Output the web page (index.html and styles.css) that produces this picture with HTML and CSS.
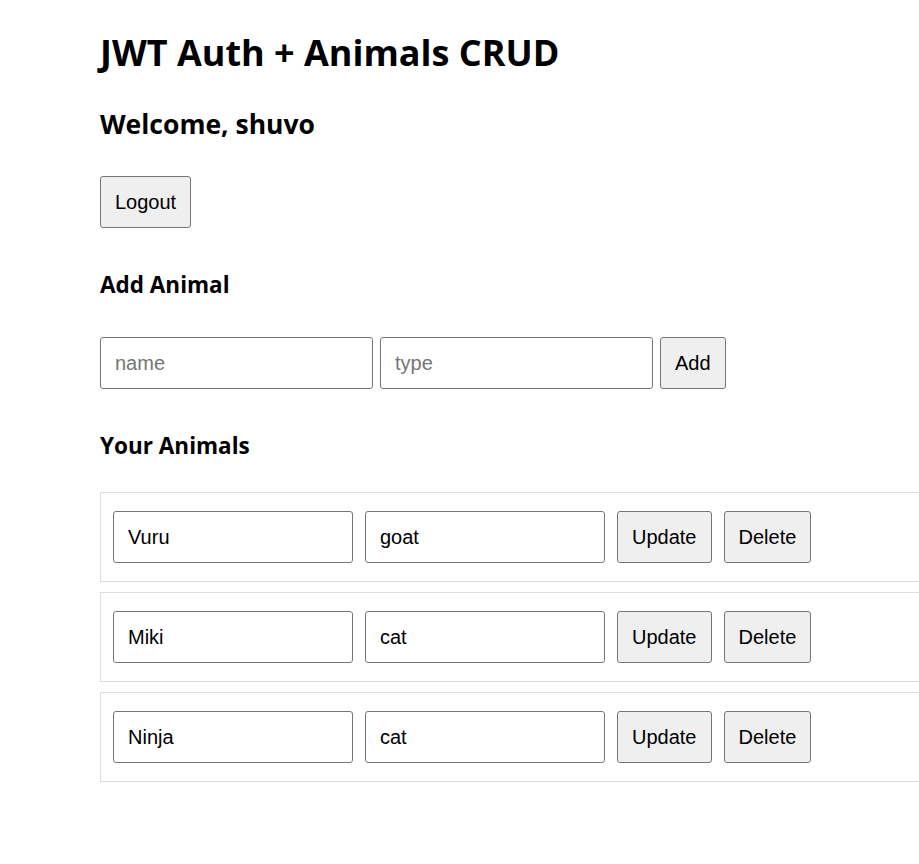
FILE: index.html
```html
<!DOCTYPE html>
<html lang="en">
<head>
<meta charset="utf-8">
<title>JWT Auth + Animals CRUD</title>
<link rel="stylesheet" href="styles.css">
</head>
<body>
<main class="page">
  <h1 class="title">JWT Auth + Animals CRUD</h1>
  <h2 class="welcome">Welcome, shuvo</h2>
  <button class="btn logout" type="button">Logout</button>

  <h3 class="section add-title">Add Animal</h3>
  <form class="add-row" onsubmit="return false">
    <input class="field add-field" type="text" placeholder="name">
    <input class="field add-field" type="text" placeholder="type">
    <button class="btn" type="submit">Add</button>
  </form>

  <h3 class="section list-title">Your Animals</h3>
  <ul class="animals">
    <li class="card">
      <input class="field card-field" type="text" value="Vuru">
      <input class="field card-field" type="text" value="goat">
      <button class="btn" type="button">Update</button>
      <button class="btn" type="button">Delete</button>
    </li>
    <li class="card">
      <input class="field card-field" type="text" value="Miki">
      <input class="field card-field" type="text" value="cat">
      <button class="btn" type="button">Update</button>
      <button class="btn" type="button">Delete</button>
    </li>
    <li class="card">
      <input class="field card-field" type="text" value="Ninja">
      <input class="field card-field" type="text" value="cat">
      <button class="btn" type="button">Update</button>
      <button class="btn" type="button">Delete</button>
    </li>
  </ul>
</main>
</body>
</html>
```
FILE: styles.css
```css
html {
  overflow-x: hidden;
  background: #fff;
}

body {
  margin: 0;
  color: #000;
  font-family: "Open Sans", "Noto Sans", sans-serif;
}

.page {
  padding: 31px 0 40px 100px;
  display: flex;
  flex-direction: column;
  align-items: flex-start;
}

.title {
  margin: 0;
  font-size: 36px;
  line-height: 44px;
  font-weight: 700;
}

.welcome {
  margin: 33px 0 0;
  font-size: 26.5px;
  line-height: 33px;
  font-weight: 700;
}

.section {
  margin: 0;
  font-size: 22.5px;
  line-height: 27px;
  font-weight: 700;
}

.add-title {
  margin-top: 43px;
}

.list-title {
  margin-top: 43px;
}

.btn {
  box-sizing: border-box;
  height: 52px;
  padding: 0 14px;
  font-family: "Liberation Sans", Arial, sans-serif;
  font-size: 20px;
  color: #000;
  background: #efefef;
  border: 1px solid #767676;
  border-radius: 3px;
}

.logout {
  margin-top: 35px;
}

.field {
  box-sizing: border-box;
  height: 52px;
  padding: 0 14px;
  font-family: "Liberation Sans", Arial, sans-serif;
  font-size: 20px;
  color: #000;
  background: #fff;
  border: 1px solid #767676;
  border-radius: 3px;
}

.field::placeholder {
  color: #757575;
}

.add-row {
  margin-top: 39px;
  display: flex;
  gap: 7px;
}

.add-field {
  width: 273px;
}

.animals {
  margin: 33px 0 0;
  padding: 0;
  list-style: none;
  display: flex;
  flex-direction: column;
  gap: 10px;
}

.card {
  box-sizing: border-box;
  width: 900px;
  padding: 18px 12px;
  border: 1px solid #ddd;
  display: flex;
  gap: 12px;
}

.card-field {
  width: 240px;
}
```
